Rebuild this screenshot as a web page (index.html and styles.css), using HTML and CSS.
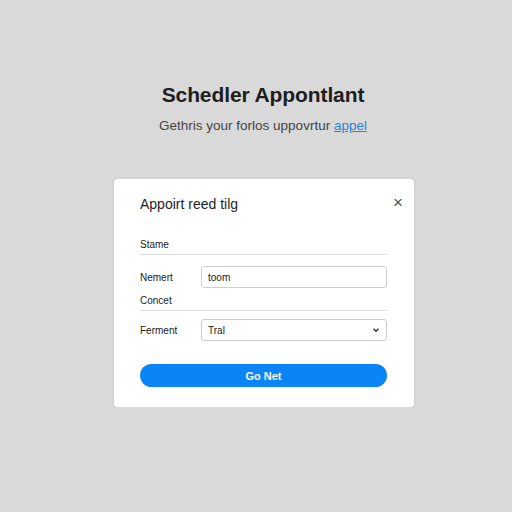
FILE: index.html
```html
<!DOCTYPE html>
<html lang="en">
<head>
  <meta charset="UTF-8">
  <meta name="viewport" content="width=device-width, initial-scale=1.0">
  <title>Schedler Appontlant</title>
  <link rel="stylesheet" href="styles.css">
</head>
<body>

  <div class="page">
    <div class="intro">
      <h1>Schedler Appontlant</h1>
      <p>Gethris your forlos uppovrtur <a href="#">appel</a></p>
    </div>

    <div class="card">
      <div class="card-header">
        <h2>Appoirt reed tilg</h2>
        <span class="close">&times;</span>
      </div>

      <div class="section">Stame</div>

      <div class="row">
        <label for="name">Nemert</label>
        <input type="text" id="name" value="toom">
      </div>

      <div class="section">Concet</div>

      <div class="row row-tight">
        <label for="type">Ferment</label>
        <div class="select">
          <span>Tral</span>
          <svg width="8" height="6" viewBox="0 0 8 6"><path d="M1.5 1.8 L4 4.3 L6.5 1.8" fill="none" stroke="#333" stroke-width="1.4"/></svg>
        </div>
      </div>

      <button class="submit">Go Net</button>
    </div>
  </div>

</body>
</html>
```

FILE: styles.css
```css
body {
  font-family: 'Liberation Sans', Arial, sans-serif;
  margin: 0;
  padding: 0;
  background-color: #d9d9d9;
}

.page {
  display: flex;
  flex-direction: column;
  align-items: center;
  padding-top: 83px;
  padding-left: 14px;
}

.intro {
  text-align: center;
}

.intro h1 {
  margin: 0;
  font-size: 21px;
  font-weight: bold;
  color: #1e1e1e;
  letter-spacing: -0.1px;
}

.intro p {
  margin: 11px 0 0;
  font-size: 13.5px;
  color: #444;
}

.intro a {
  color: #2a84d8;
}

.card {
  width: 300px;
  margin-top: 46px;
  margin-left: 2px;
  box-sizing: border-box;
  padding: 13px 27px 20px 26px;
  background: #fff;
  border-radius: 4px;
  box-shadow: 0 0 3px rgba(0, 0, 0, 0.08);
}

.card-header {
  display: flex;
  justify-content: space-between;
  align-items: center;
  margin-right: -16px;
}

.card-header h2 {
  margin: 4px 0 0;
  font-size: 14px;
  font-weight: normal;
  color: #1e1e1e;
}

.close {
  font-size: 17px;
  color: #555;
  line-height: 1;
}

.section {
  margin-top: 27px;
  padding-bottom: 4px;
  font-size: 10px;
  color: #222;
  border-bottom: 1px solid #ddd;
}

.section + .row {
  margin-top: 11px;
}

.section + .row-tight {
  margin-top: 8px;
}

.row + .section {
  margin-top: 7px;
}

.row {
  display: flex;
  align-items: center;
}

.row label {
  width: 61px;
  font-size: 10px;
  color: #222;
}

.row input, .select {
  flex: 1;
  height: 22px;
  box-sizing: border-box;
  padding: 0 6px;
  border: 1px solid #cfcfcf;
  border-radius: 3px;
  font-family: inherit;
  font-size: 10px;
  color: #222;
}

.select {
  display: flex;
  align-items: center;
  justify-content: space-between;
}

.submit {
  display: block;
  width: 100%;
  height: 23px;
  margin-top: 23px;
  border: none;
  border-radius: 12px;
  background: #0b84f5;
  color: #fff;
  font-family: inherit;
  font-size: 11px;
  font-weight: bold;
  cursor: pointer;
}
```
